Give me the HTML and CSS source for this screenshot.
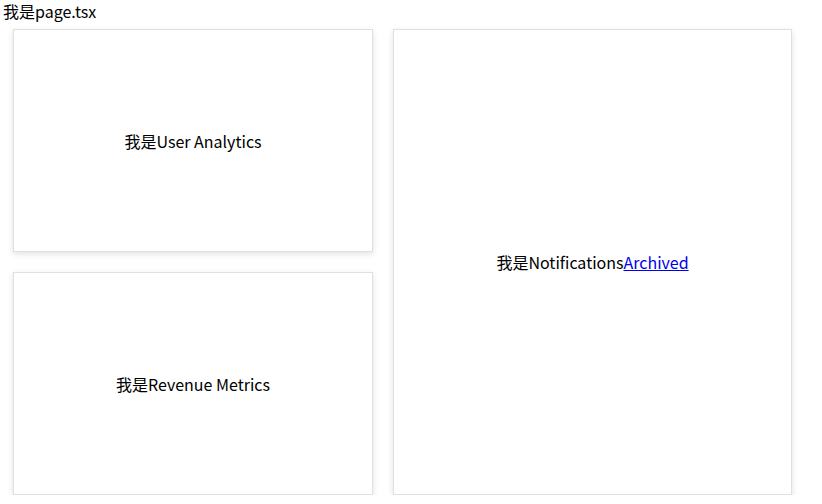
FILE: index.html
```html
<!DOCTYPE html>
<html lang="zh">
<head>
<meta charset="utf-8">
<link rel="stylesheet" href="styles.css">
</head>
<body>
<div class="page-title">我是page.tsx</div>
<div class="grid">
  <div class="card card-a">我是User Analytics</div>
  <div class="card card-c">我是Notifications<a href="#">Archived</a></div>
  <div class="card card-b">我是Revenue Metrics</div>
</div>
</body>
</html>
```
FILE: styles.css
```css
html, body {
  margin: 0;
  padding: 0;
  background: #fff;
}
body {
  font-family: "Noto Sans CJK SC", "Noto Sans", sans-serif;
  font-size: 16px;
  color: #000;
}
.page-title {
  padding-left: 3px;
  height: 22px;
  line-height: 22px;
}
.grid {
  display: grid;
  grid-template-columns: 360px 399px;
  grid-template-rows: 223px 223px;
  column-gap: 20px;
  row-gap: 20px;
  margin: 7px 0 0 13px;
}
.card {
  box-sizing: border-box;
  border: 1px solid #e0e0e0;
  background: #fff;
  box-shadow: 0 2px 6px rgba(0, 0, 0, 0.12);
  display: flex;
  align-items: center;
  justify-content: center;
}
.card-a { grid-column: 1; grid-row: 1; }
.card-b { grid-column: 1; grid-row: 2; }
.card-c { grid-column: 2; grid-row: 1 / span 2; }
.card a {
  color: #0000ee;
  text-decoration: underline;
}
```
